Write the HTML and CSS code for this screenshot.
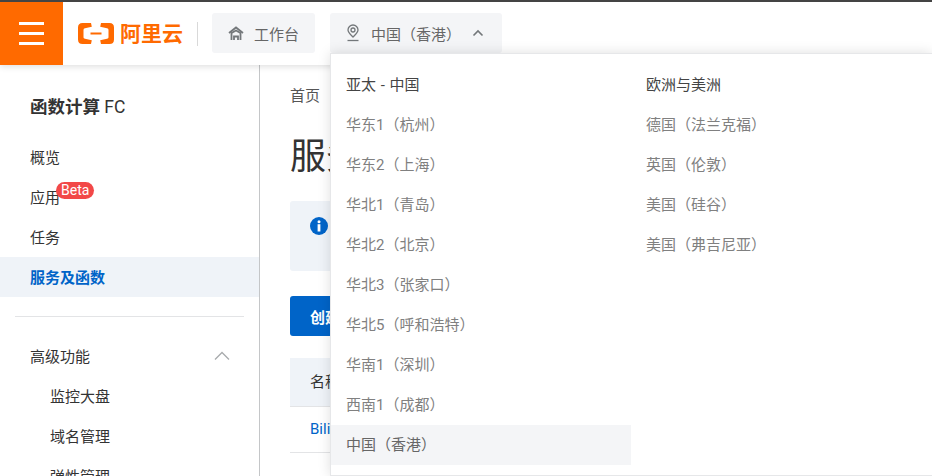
FILE: index.html
```html
<!DOCTYPE html>
<html lang="zh-CN">

<head>
    <meta charset="UTF-8">
    <title>函数计算 FC</title>
    <link rel="stylesheet" href="styles.css">
</head>

<body>
    <header class="topbar">
        <div class="burger"><span></span><span></span><span></span></div>
        <div class="logo">
            <svg class="logo-mark" width="38" height="23" viewBox="0 0 38 23">
                <path d="M14 1H5.500C2.500 1 1 2.500 1 5.500V17.500C1 20.500 2.500 22 5.500 22H14L14.800 18.300L8 16.800C7 16.600 6.500 16 6.500 15V8C6.500 7 7 6.400 8 6.200L14.800 4.700Z" fill="#ff6a00"/>
                <path d="M24 1H32.500C35.500 1 37 2.500 37 5.500V17.500C37 20.500 35.500 22 32.500 22H24L23.200 18.300L30 16.800C31 16.600 31.500 16 31.500 15V8C31.500 7 31 6.400 30 6.200L23.200 4.700Z" fill="#ff6a00"/>
                <rect x="13.500" y="10.500" width="11" height="2" fill="#ff6a00"/>
            </svg>
            <span class="logo-text">阿里云</span>
        </div>
        <div class="topbar-sep"></div>
        <div class="top-btn workbench">
            <svg width="16" height="15" viewBox="0 0 16 15" fill="none" stroke="#73777a" stroke-width="1.800">
                <path d="M1 7L8 1.500L15 7"/>
                <path d="M3.500 14V7L8 4.500L12.500 7V14"/>
                <path d="M6 14V10.500H10V14"/>
            </svg>
            <span>工作台</span>
        </div>
        <div class="top-btn region">
            <svg width="14" height="18" viewBox="0 0 14 18" fill="none" stroke="#73777a" stroke-width="1.300">
                <path d="M7 13C4.500 10.500 2 8.500 2 6A5 5 0 0 1 12 6C12 8.500 9.500 10.500 7 13Z"/>
                <circle cx="7" cy="6" r="2"/>
                <path d="M1.500 16.500H12.500"/>
            </svg>
            <span>中国（香港）</span>
            <svg width="12" height="8" viewBox="0 0 12 8" fill="none" stroke="#73777a" stroke-width="1.600">
                <path d="M1.500 6.500L6 2L10.500 6.500"/>
            </svg>
        </div>
    </header>

    <div class="main">
        <aside class="sidebar">
            <div class="side-title">函数计算 <span class="side-title-code">FC</span></div>
            <a class="side-item">概览</a>
            <a class="side-item">应用<span class="beta">Beta</span></a>
            <a class="side-item">任务</a>
            <a class="side-item active">服务及函数</a>
            <div class="side-divider"></div>
            <a class="side-item group">高级功能
                <svg width="16" height="10" viewBox="0 0 16 10" fill="none" stroke="#a8abad" stroke-width="1.300">
                    <path d="M1 8.500L8 1.500L15 8.500"/>
                </svg>
            </a>
            <a class="side-item sub">监控大盘</a>
            <a class="side-item sub">域名管理</a>
            <a class="side-item sub">弹性管理</a>
        </aside>

        <section class="content">
            <div class="crumb">首页</div>
            <h1 class="page-title">服务</h1>
            <div class="notice">
                <svg width="18" height="18" viewBox="0 0 18 18">
                    <circle cx="9" cy="9" r="9" fill="#0064c8"/>
                    <circle cx="9" cy="4.700" r="1.500" fill="#fff"/>
                    <rect x="7.600" y="7.200" width="2.800" height="7.300" fill="#fff"/>
                </svg>
            </div>
            <button class="create-btn">创建</button>
            <div class="table-head">名称</div>
            <div class="table-row">Bilibili</div>
        </section>
    </div>

    <div class="region-menu">
        <div class="region-col">
            <div class="region-head">亚太 - 中国</div>
            <div class="region-item">华东1（杭州）</div>
            <div class="region-item">华东2（上海）</div>
            <div class="region-item">华北1（青岛）</div>
            <div class="region-item">华北2（北京）</div>
            <div class="region-item">华北3（张家口）</div>
            <div class="region-item">华北5（呼和浩特）</div>
            <div class="region-item">华南1（深圳）</div>
            <div class="region-item">西南1（成都）</div>
            <div class="region-item current">中国（香港）</div>
        </div>
        <div class="region-col">
            <div class="region-head">欧洲与美洲</div>
            <div class="region-item">德国（法兰克福）</div>
            <div class="region-item">英国（伦敦）</div>
            <div class="region-item">美国（硅谷）</div>
            <div class="region-item">美国（弗吉尼亚）</div>
        </div>
    </div>
</body>

</html>
```

FILE: styles.css
```css
* {
    margin: 0;
    padding: 0;
    box-sizing: border-box;
    font-family: Roboto, 'Noto Sans CJK SC', sans-serif;
}

body {
    width: 932px;
    height: 476px;
    overflow: hidden;
    background: #fff;
    color: #333;
    font-size: 15px;
    position: relative;
}

.topbar {
    height: 65px;
    border-top: 2px solid #444;
    display: flex;
    align-items: center;
    background: #fff;
    box-shadow: 0 2px 6px rgba(0, 0, 0, 0.12);
    position: relative;
    z-index: 1;
}

.burger {
    width: 63px;
    height: 63px;
    background: #ff6a00;
    display: flex;
    flex-direction: column;
    justify-content: center;
    align-items: center;
    gap: 7px;
}

.burger span {
    width: 25px;
    height: 3px;
    background: #fff;
}

.logo {
    display: flex;
    align-items: center;
    gap: 5px;
    margin-left: 14px;
}

.logo-text {
    color: #ff6a00;
    font-size: 21px;
    font-weight: 700;
    line-height: 24px;
}

.topbar-sep {
    width: 1px;
    height: 24px;
    background: #d9d9d9;
    margin: 0 14px 0 14px;
}

.top-btn {
    height: 40px;
    margin-bottom: 1px;
    background: #f4f5f7;
    border-radius: 3px;
    display: flex;
    align-items: center;
    color: #666;
}

.workbench {
    width: 103px;
    padding-left: 16px;
    gap: 10px;
}

.region {
    width: 172px;
    margin-left: 15px;
    padding-left: 16px;
    gap: 11px;
}

.main {
    display: flex;
    height: 411px;
}

.sidebar {
    width: 260px;
    border-right: 1px solid #c4c6c8;
    flex-shrink: 0;
    padding-top: 22px;
}

.side-title {
    font-size: 17.500px;
    font-weight: 700;
    line-height: 40px;
    padding-left: 30px;
    margin-bottom: 10px;
}

.side-title-code {
    font-weight: 400;
}

.side-item {
    display: flex;
    align-items: center;
    height: 40px;
    padding-left: 30px;
    padding-bottom: 1px;
    position: relative;
    color: #333;
}

.side-item.active {
    background: #eff3f8;
    color: #0064c8;
    font-weight: 700;
}

.side-item.group {
    justify-content: space-between;
    padding-right: 29px;
}

.side-item.sub {
    padding-left: 50px;
}

.beta {
    position: absolute;
    left: 56px;
    top: 5px;
    height: 17px;
    padding: 0 5px;
    border-radius: 9px;
    background: #f24848;
    color: #fff;
    font-size: 14px;
    line-height: 17px;
    font-weight: 400;
}

.side-divider {
    height: 1px;
    background: #e3e4e6;
    margin: 19px 15px 19px;
}

.content {
    flex: 1;
    padding: 19px 30px 0;
}

.crumb {
    line-height: 24px;
    color: #555;
}

.page-title {
    font-size: 36px;
    font-weight: 400;
    line-height: 52px;
    margin-top: 23px;
    margin-bottom: -2px;
    white-space: nowrap;
}

.notice {
    height: 70px;
    background: #eff3f8;
    border-radius: 3px;
    margin-top: 20px;
    padding: 16px 20px;
}

.create-btn {
    display: block;
    height: 40px;
    width: 100px;
    margin-top: 25px;
    padding-left: 20px;
    text-align: left;
    border: 0;
    border-radius: 3px;
    background: #0064c8;
    color: #fff;
    font-size: 15px;
    font-weight: 700;
}

.table-head {
    height: 49px;
    margin-top: 22px;
    padding-left: 20px;
    line-height: 48px;
    background: #eff3f8;
    border-bottom: 1px solid #e3e4e6;
}

.table-row {
    height: 46px;
    padding-left: 20px;
    line-height: 44px;
    color: #0064c8;
    border-bottom: 1px solid #e3e4e6;
}

.region-menu {
    position: absolute;
    left: 330px;
    top: 53px;
    width: 602px;
    height: 423px;
    background: #fff;
    border: 1px solid #e6e7e9;
    border-right: 0;
    box-shadow: 0 0 12px rgba(0, 0, 0, 0.13);
    display: flex;
    padding-top: 11px;
    z-index: 2;
}

.region-col {
    width: 300px;
}

.region-head,
.region-item {
    height: 40px;
    line-height: 40px;
    padding-left: 15px;
}

.region-head {
    color: #444;
    word-spacing: 1px;
}

.region-item {
    color: #808080;
}

.region-item.current {
    background: #f4f5f7;
    color: #666;
}
```
